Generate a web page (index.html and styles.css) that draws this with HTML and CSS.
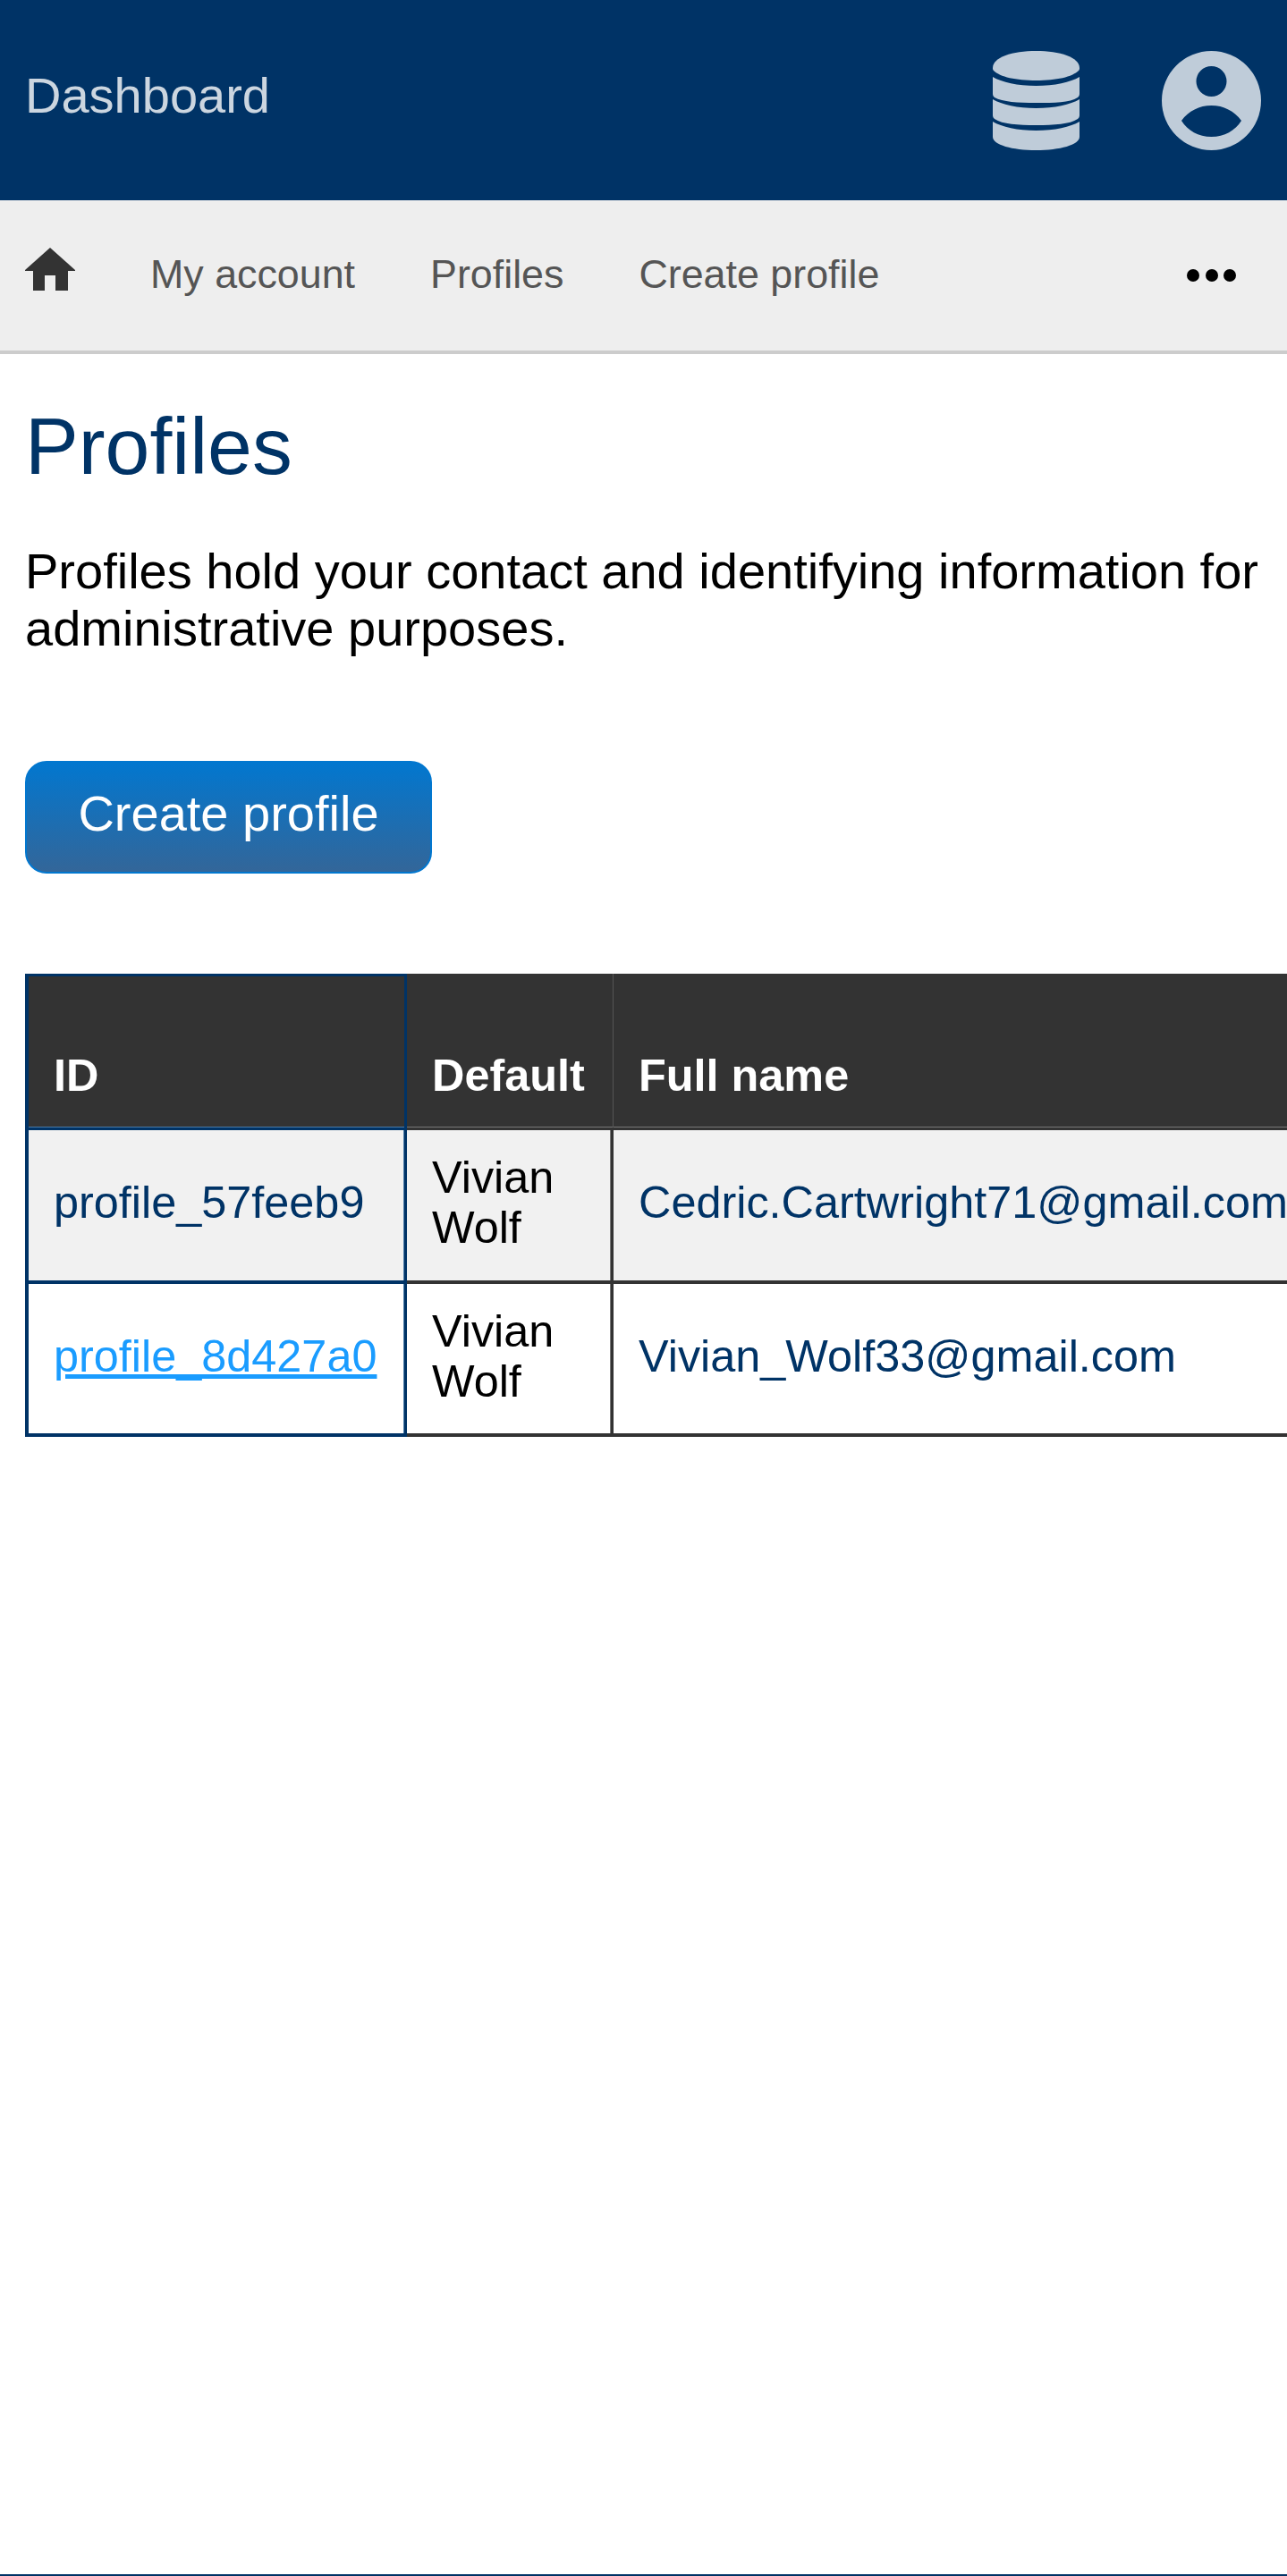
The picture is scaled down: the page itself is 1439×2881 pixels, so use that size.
FILE: index.html
```html
<!DOCTYPE html>
<html lang="en">
<head>
    <meta charset="UTF-8">
    <meta name="viewport" content="width=device-width, initial-scale=1.0">
    <title>Profiles</title>
    <link rel="stylesheet" href="styles.css">
</head>
<body>
    <header class="topbar">
        <a class="brand" href="#">Dashboard</a>
        <div class="topbar-icons">
            <svg class="icon-db" width="97" height="111" viewBox="0 0 97 111">
                <path d="M48.5 0C22 0 0 7 0 19C0 20 0 21 1 22C8 29 26 33 48.5 33C71 33 89 29 96 22C97 21 97 20 97 19C97 7 75 0 48.5 0Z"/>
                <path d="M0 29C10 35 28 39 48.5 39C69 39 87 35 97 29V48C97 50 96 51 95 52C86 58 69 58 48.5 58C28 58 11 57 2 52C1 51 0 50 0 48Z"/>
                <path d="M0 54C10 60 28 64 48.5 64C69 64 87 60 97 54V72C97 74 96 75 95 76C86 82 69 83 48.5 83C28 83 11 82 2 76C1 75 0 74 0 72Z"/>
                <path d="M0 79C10 85 28 89 48.5 89C69 89 87 85 97 79V96C97 105 75 111 48.5 111C22 111 0 105 0 96Z"/>
            </svg>
            <svg class="icon-user" width="111" height="111" viewBox="0 0 111 111">
                <path fill-rule="evenodd" d="M55.5 0A55.5 55.5 0 1 0 55.5 111A55.5 55.5 0 1 0 55.5 0ZM55.5 17A17 17 0 1 1 55.5 51A17 17 0 1 1 55.5 17ZM22 78C30 67 42 61 55.5 61C69 61 81 67 89 78C82 89 70 96 55.5 96C41 96 29 89 22 78Z"/>
            </svg>
        </div>
    </header>
    <nav class="subnav">
        <a class="home" href="#">
            <svg width="56" height="48" viewBox="0 0 56 48">
                <path d="M28 0L56 25V26H48V48H34V31H22V48H9V26H0V25Z"/>
            </svg>
        </a>
        <a href="#">My account</a>
        <a href="#">Profiles</a>
        <a href="#">Create profile</a>
        <span class="more">
            <i></i><i></i><i></i>
        </span>
    </nav>
    <main class="content">
        <h1>Profiles</h1>
        <p>Profiles hold your contact and identifying information for administrative purposes.</p>
        <a class="btn" href="#">Create profile</a>
        <div class="table-wrap">
            <table>
                <thead>
                    <tr>
                        <th class="col-id">ID</th>
                        <th class="col-default">Default</th>
                        <th class="col-name">Full name</th>
                    </tr>
                </thead>
                <tbody>
                    <tr class="odd">
                        <td class="col-id"><a href="#">profile_57feeb9</a></td>
                        <td class="col-default">Vivian Wolf</td>
                        <td class="col-name">Cedric.Cartwright71@gmail.com</td>
                    </tr>
                    <tr class="last">
                        <td class="col-id"><a class="hover" href="#">profile_8d427a0</a></td>
                        <td class="col-default">Vivian Wolf</td>
                        <td class="col-name">Vivian_Wolf33@gmail.com</td>
                    </tr>
                </tbody>
            </table>
        </div>
    </main>
    <footer class="page-end"></footer>
</body>
</html>
```

FILE: styles.css
```css
html, body {
    margin: 0;
    padding: 0;
}
body {
    font-family: "Liberation Sans", Arial, sans-serif;
    background-color: white;
    color: black;
    min-height: 100vh;
    display: flex;
    flex-direction: column;
}
a {
    text-decoration: none;
}
.topbar {
    height: 224px;
    background-color: #003366;
    display: flex;
    align-items: center;
    justify-content: space-between;
    padding: 0 29px 0 28px;
    flex-shrink: 0;
}
.brand {
    font-size: 56px;
    color: #ccd6e0;
    margin-bottom: 11px;
}
.topbar-icons {
    display: flex;
    align-items: center;
    gap: 92px;
}
.topbar-icons svg {
    display: block;
    fill: #bfccd9;
}
.subnav {
    height: 168px;
    background-color: #eeeeee;
    border-bottom: 4px solid #cccccc;
    display: flex;
    align-items: center;
    gap: 84px;
    padding: 0 57px 0 28px;
    flex-shrink: 0;
}
.subnav a {
    font-size: 44.8px;
    color: #555555;
    margin-bottom: 4px;
}
.subnav .home {
    display: block;
    height: 48px;
    margin-top: -10px;
}
.home svg {
    display: block;
    fill: #333333;
}
.more {
    margin-left: auto;
    display: flex;
    gap: 6.5px;
}
.more i {
    display: block;
    width: 14px;
    height: 14px;
    border-radius: 50%;
    background-color: black;
}
.content {
    flex: 1;
    min-width: 0;
    padding: 0 0 0 28px;
}
h1 {
    font-size: 89.6px;
    font-weight: normal;
    color: #003366;
    margin: 52px 0 0;
    line-height: 102px;
}
p {
    font-size: 56px;
    line-height: 64px;
    margin: 57px 0 0;
    max-width: 1400px;
}
.btn {
    display: block;
    box-sizing: border-box;
    width: 455px;
    height: 126px;
    margin-top: 116px;
    border: 2px solid #0277cf;
    border-radius: 24px;
    background: linear-gradient(#0277cf, #336699);
    color: white;
    font-size: 56px;
    line-height: 113px;
    text-align: center;
}
.table-wrap {
    margin-top: 112px;
    overflow: hidden;
}
table {
    border-collapse: separate;
    border-spacing: 0;
    table-layout: fixed;
    width: 1700px;
    font-size: 50.4px;
}
th, td {
    box-sizing: border-box;
    text-align: left;
    padding: 0 28px;
}
th {
    height: 175px;
    background-color: #333333;
    color: white;
    vertical-align: bottom;
    padding-bottom: 29px;
    border-bottom: 3px solid #333333;
    box-shadow: inset -1px 0 #555555, inset 0 -1px #777777;
}
td {
    height: 172px;
    color: black;
    padding-bottom: 6px;
    border-right: 3px solid #333333;
    border-bottom: 4px solid #333333;
    box-shadow: inset -1px 0 #777777;
    line-height: 56px;
}
.last td {
    height: 171px;
}
.col-id {
    width: 427px;
    border-left: 4px solid #003366;
    border-right: 3px solid #003366;
}
th.col-id {
    border-top: 3px solid #003366;
    border-bottom: 3px solid #003366;
    box-shadow: inset 0 -1px #4a7ba8;
}
td.col-id {
    border-bottom-color: #003366;
    box-shadow: inset -1px 0 #4a7ba8;
}
.col-default {
    width: 231px;
}
.odd td {
    background-color: #f1f1f1;
}
td a {
    color: #003366;
}
td a.hover {
    color: #1a9cff;
    text-decoration: underline;
}
.col-name {
    color: #003366;
}
th.col-name {
    color: white;
}
.page-end {
    height: 2px;
    background-color: #003366;
    flex-shrink: 0;
}
```
